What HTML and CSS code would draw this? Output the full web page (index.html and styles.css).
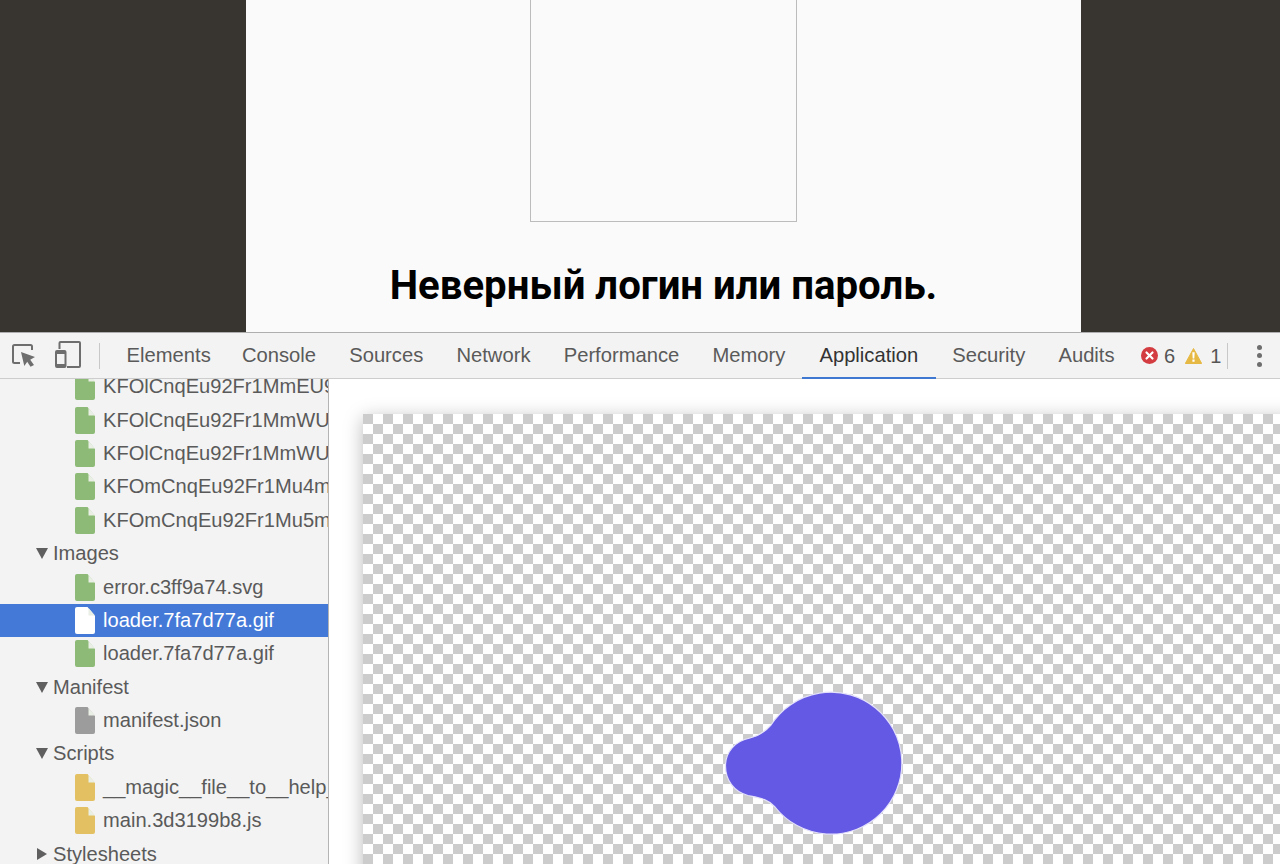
FILE: index.html
```html
<!DOCTYPE html>
<html lang="ru">
<head>
<meta charset="utf-8">
<title>DevTools</title>
<link rel="stylesheet" href="styles.css">
</head>
<body>
<svg class="defs" width="0" height="0" aria-hidden="true">
  <symbol id="file" viewBox="0 0 20 27">
    <path d="M2 0H12.5L20 9V25a2 2 0 0 1-2 2H2a2 2 0 0 1-2-2V2a2 2 0 0 1 2-2Z" fill="currentColor"/>
    <path class="fold" d="M13.500 1L20 8.500H13.500Z"/>
  </symbol>
</svg>
<section class="page">
  <div class="sheet">
    <div class="image-box"></div>
    <h1 class="message">Неверный логин или пароль.</h1>
  </div>
</section>
<section class="devtools">
  <header class="toolbar">
    <div class="tool-icons">
      <svg class="icon-inspect" width="24" height="24" viewBox="0 0 24 24">
        <path d="M8 19H2.5a1.5 1.5 0 0 1-1.5-1.5V2.500a1.500 1.500 0 0 1 1.500-1.500H18.500a1.500 1.500 0 0 1 1.500 1.500V6" fill="none" stroke="#6e6e6e" stroke-width="2"/>
        <path d="M9 8L23 13L18.200 15.800L22 21L18.500 22.800L15.200 17.800L12.300 22Z" fill="#6e6e6e"/>
      </svg>
      <svg class="icon-device" width="26" height="27" viewBox="0 0 26 27">
        <path d="M4.500 8V2a1 1 0 0 1 1-1H24a1 1 0 0 1 1 1V25a1 1 0 0 1-1 1H12" fill="none" stroke="#6e6e6e" stroke-width="2"/>
        <rect x="1" y="10" width="9.500" height="16" rx="1" fill="none" stroke="#6e6e6e" stroke-width="2"/>
        <path d="M1 10h9.500v3H1ZM1 23h9.500v3H1Z" fill="#6e6e6e"/>
      </svg>
      <span class="divider"></span>
    </div>
    <nav class="tabs">
      <span class="tab">Elements</span>
      <span class="tab">Console</span>
      <span class="tab">Sources</span>
      <span class="tab">Network</span>
      <span class="tab">Performance</span>
      <span class="tab">Memory</span>
      <span class="tab active">Application</span>
      <span class="tab">Security</span>
      <span class="tab">Audits</span>
    </nav>
    <div class="status">
      <svg class="icon-error" width="17" height="17" viewBox="0 0 17 17">
        <circle cx="8.500" cy="8.500" r="8.500" fill="#d33c40"/>
        <path d="M5.500 5.500L11.500 11.500M11.500 5.500L5.500 11.500" stroke="#fff" stroke-width="2.200" stroke-linecap="round"/>
      </svg>
      <span class="count count-error">6</span>
      <svg class="icon-warning" width="17" height="16" viewBox="0 0 17 16">
        <path d="M8.500 .5L16.700 15.500H.3Z" fill="#e6b944" stroke="#e6b944" stroke-linejoin="round"/>
        <path d="M7.300 4.200H9.700L9.300 10.500H7.700Z M7.400 11.500h2.200v2.200h-2.200Z" fill="#fff"/>
      </svg>
      <span class="count count-warning">1</span>
      <span class="divider"></span>
      <span class="menu-dots"><i></i><i></i><i></i></span>
    </div>
  </header>
  <div class="panes">
    <aside class="tree">
      <div class="tree-list">
        <div class="row file-row"><svg class="file green"><use href="#file"/></svg><span>KFOlCnqEu92Fr1MmEU9fBBc4.woff2</span></div>
        <div class="row file-row"><svg class="file green"><use href="#file"/></svg><span>KFOlCnqEu92Fr1MmWUlfBBc4.woff2</span></div>
        <div class="row file-row"><svg class="file green"><use href="#file"/></svg><span>KFOlCnqEu92Fr1MmWUlfChc4.woff2</span></div>
        <div class="row file-row"><svg class="file green"><use href="#file"/></svg><span>KFOmCnqEu92Fr1Mu4mxK.woff2</span></div>
        <div class="row file-row"><svg class="file green"><use href="#file"/></svg><span>KFOmCnqEu92Fr1Mu5mxKOzY.woff2</span></div>
        <div class="row folder-row"><i class="arrow open"></i><span>Images</span></div>
        <div class="row file-row"><svg class="file green"><use href="#file"/></svg><span>error.c3ff9a74.svg</span></div>
        <div class="row file-row selected"><svg class="file white"><use href="#file"/></svg><span>loader.7fa7d77a.gif</span></div>
        <div class="row file-row"><svg class="file green"><use href="#file"/></svg><span>loader.7fa7d77a.gif</span></div>
        <div class="row folder-row"><i class="arrow open"></i><span>Manifest</span></div>
        <div class="row file-row"><svg class="file grey"><use href="#file"/></svg><span>manifest.json</span></div>
        <div class="row folder-row"><i class="arrow open"></i><span>Scripts</span></div>
        <div class="row file-row"><svg class="file yellow"><use href="#file"/></svg><span>__magic__file__to__help__webpack.js</span></div>
        <div class="row file-row"><svg class="file yellow"><use href="#file"/></svg><span>main.3d3199b8.js</span></div>
        <div class="row folder-row"><i class="arrow closed"></i><span>Stylesheets</span></div>
      </div>
    </aside>
    <main class="preview">
      <div class="checker">
        <svg class="blob" width="917" height="450" viewBox="363 414 917 450">
          <path d="M771 725A71 71 0 1 1 775 807C768 799 760 798 748 795.500C734 792 725.500 780 725.500 766C725.500 752 735 741 750 738C758 736 764 733 771 725Z" fill="#6459e4" stroke="#e4e1fb" stroke-width="1.200"/>
        </svg>
      </div>
    </main>
  </div>
</section>
</body>
</html>
```
FILE: styles.css
```css
* { box-sizing: border-box; }
html, body { margin: 0; height: 864px; overflow: hidden; }
body { display: flex; flex-direction: column; font-family: "Liberation Sans", Arial, sans-serif; background: #fff; }
.defs { display: block; height: 0; }

.page { height: 332px; flex: none; background: #38342f; display: flex; justify-content: center; padding-left: 47px; overflow: hidden; }
.sheet { width: 835px; background: #fafafa; display: flex; flex-direction: column; align-items: center; }
.image-box { width: 267px; height: 222px; flex: none; background: #fafafa; border: 1px solid #bcbcbc; border-top: 0; }
.message { margin: 41px 0 0; font: 700 40.150px/46px Roboto, sans-serif; color: #000; white-space: nowrap; }

.devtools { flex: 1; display: flex; flex-direction: column; min-height: 0; }
.toolbar { height: 47px; flex: none; display: flex; align-items: stretch; background: #f3f3f3; border-top: 1px solid #aeaeae; border-bottom: 1px solid #cdcdcd; }
.tool-icons { width: 110px; flex: none; display: flex; align-items: center; }
.icon-inspect { margin: 0 0 0 12px; flex: none; }
.icon-device { margin: -2px 0 0 19px; flex: none; }
.divider { width: 1px; height: 26px; background: #c8c8c8; flex: none; }
.tool-icons .divider { margin-left: 18px; }

.tabs { display: flex; width: 1020px; flex: none; margin-right: -10px; }
.tab { height: 46px; padding: 0 16.600px; line-height: 44px; font-size: 20.200px; color: #5a5a5a; white-space: nowrap; border-bottom: 2px solid transparent; margin-bottom: -1px; }
.tab:first-child { padding-right: 14.600px; }
.tab.active { padding: 0 17.500px; color: #333; border-bottom-color: #3f78d0; }

.status { position: absolute; right: 0; top: 333px; height: 45px; width: 139px; display: flex; align-items: center; }
.icon-error { flex: none; }
.count { font-size: 20px; color: #555; line-height: 1; }
.count-error { margin-left: 6px; }
.icon-warning { margin-left: 10px; flex: none; }
.count-warning { margin-left: 8px; }
.status .divider { margin-left: 6px; }
.menu-dots { margin-left: 29px; display: flex; flex-direction: column; gap: 3.500px; }
.menu-dots i { display: block; width: 5px; height: 5px; border-radius: 50%; background: #6e6e6e; }

.panes { flex: 1; display: flex; min-height: 0; }
.tree { width: 329px; flex: none; background: #f3f3f3; border-right: 1px solid #b4b4b4; overflow: hidden; }
.tree-list { margin-top: -9px; }
.row { height: 33.400px; display: flex; align-items: center; font-size: 20.100px; color: #5a5a5a; white-space: nowrap; overflow: hidden; }
.file-row { padding-left: 75px; }
.folder-row { padding-left: 36px; }
.file { width: 20px; height: 27px; flex: none; margin-right: 8px; }
.fold { fill: #e9efe4; }
.green { color: #8dba76; }
.grey { color: #9c9c9c; }
.yellow { color: #e3c163; }
.white { color: #fff; }
.selected { background: #4479d8; color: #fff; }
.arrow { display: block; flex: none; width: 0; height: 0; margin-right: 5px; }
.arrow.open { border-left: 6px solid transparent; border-right: 6px solid transparent; border-top: 11px solid #5f5f5f; }
.arrow.closed { margin: 0 6px 0 1px; border-top: 6.500px solid transparent; border-bottom: 6.500px solid transparent; border-left: 10px solid #5f5f5f; }

.preview { flex: 1; min-width: 0; background: #fff; overflow: hidden; padding: 35px 0 0 34px; }
.checker { position: relative; width: 1000px; height: 600px; background: repeating-conic-gradient(#fff 0 25%, #ccc 0 50%) 0 0 / 20px 20px; box-shadow: 0 4px 18px rgba(0, 0, 0, .28); }
.blob { position: absolute; left: 0; top: 0; }
```
